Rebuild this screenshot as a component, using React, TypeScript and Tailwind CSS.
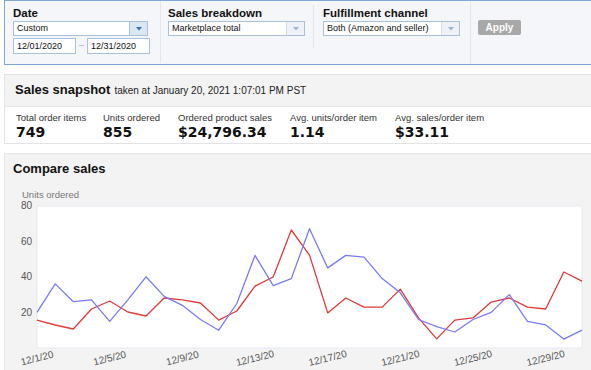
import React from "react";

const units = [20, 36, 26, 27, 15, 27, 40, 29, 24, 16, 10, 25, 52, 35, 39, 67, 45, 52, 51, 39, 31, 16, 12, 9, 16, 20, 30, 15, 13, 5, 10];
const prior = [15.7, 12.9, 10.7, 21.9, 26.4, 20.2, 18, 28.1, 27, 25.3, 15.7, 20.8, 34.8, 39.9, 66.3, 52.2, 19.7, 28.1, 23, 23, 33.1, 16.9, 5.1, 15.7, 16.9, 25.8, 28.1, 23, 21.9, 42.7, 37.6];

const X0 = 37;
const X1 = 582;
const Y0 = 348;
const step = (X1 - X0) / 30;
const py = (v: number) => Y0 - v * 1.78;
const pts = (d: number[]) => d.map((v, i) => `${(X0 + i * step).toFixed(1)},${py(v).toFixed(1)}`).join(" ");

const Arrow = ({ active }: { active?: boolean }) => (
  <div
    className={
      "w-[18px] h-full flex items-center justify-center border-l " +
      (active ? "bg-[#d9e6f4] border-[#a9c0dc]" : "bg-[#eef2f8] border-[#d3dfec]")
    }
  >
    <svg width="6" height="4" viewBox="0 0 6 4">
      <path d="M0 0 L6 0 L3 3.5 Z" fill={active ? "#3f70b2" : "#9fb3cc"} />
    </svg>
  </div>
);

const Select = ({ value, width, active }: { value: string; width: string; active?: boolean }) => (
  <div className={"h-[15px] flex bg-white border border-[#a9c0dc] " + width}>
    <div className="flex-1 pl-[3px] text-[9px] leading-[13px] text-[#111]">{value}</div>
    <Arrow active={active} />
  </div>
);

const Metric = ({ label, value, width }: { label: string; value: string; width: string }) => (
  <div className={width}>
    <div className="text-[9.5px] leading-[12px] text-[#333]">{label}</div>
    <div className="font-['DejaVu_Sans',Verdana,sans-serif] font-bold text-[14px] leading-[16px] text-[#111]">{value}</div>
  </div>
);

const ticks = ["12/1/20", "12/5/20", "12/9/20", "12/13/20", "12/17/20", "12/21/20", "12/25/20", "12/29/20"];

export default function App() {
  return (
    <div className="w-[591px] h-[370px] overflow-hidden bg-white font-['Liberation_Sans',Arial,sans-serif] text-[#111]">
      {/* Filters */}
      <div className="ml-[4px] w-[600px] h-[65px] border border-[#7fa6d8] bg-[#f5f6fa] flex">
        <div className="w-[156px] pl-[8px] pt-[5px] border-r border-[#e3e6ee] mb-[1px]">
          <div className="text-[11.5px] font-bold leading-[14px]">Date</div>
          <Select value="Custom" width="w-[135px] mt-[1px]" active />
          <div className="flex items-center mt-[2px]">
            <div className="w-[63px] h-[16px] bg-white border border-[#a9c0dc] text-[9px] leading-[14px] pl-[3px]">12/01/2020</div>
            <div className="w-[11px] text-center text-[9px] text-[#aaa]">–</div>
            <div className="w-[63px] h-[16px] bg-white border border-[#a9c0dc] text-[9px] leading-[14px] pl-[3px]">12/31/2020</div>
          </div>
        </div>
        <div className="w-[153px] pl-[7px] pt-[5px] border-r border-[#e3e6ee] mb-[16px] mt-[4px]">
          <div className="text-[11.5px] font-bold leading-[14px] -mt-[4px]">Sales breakdown</div>
          <Select value="Marketplace total" width="w-[137px] mt-[1px]" />
        </div>
        <div className="w-[157px] pl-[9px] pt-[5px] border-r border-[#e3e6ee]">
          <div className="text-[11.5px] font-bold leading-[14px]">Fulfillment channel</div>
          <Select value="Both (Amazon and seller)" width="w-[137px] mt-[1px]" />
        </div>
        <div className="pl-[7px] pt-[19px]">
          <div className="w-[43px] h-[15px] rounded-[2px] bg-[#a8a8a8] text-white font-bold text-[10px] leading-[15px] text-center">
            Apply
          </div>
        </div>
      </div>

      {/* Sales snapshot */}
      <div className="ml-[4px] mt-[9px] w-[600px] border border-[#e4e4e4]">
        <div className="h-[32px] bg-[#f3f3f3] border-b border-[#e4e4e4] pl-[10px] pt-[7px] flex items-baseline gap-[4px]">
          <span className="text-[13px] font-bold leading-[16px]">Sales snapshot</span>
          <span className="text-[10px] leading-[16px] text-[#222]">taken at January 20, 2021 1:07:01 PM PST</span>
        </div>
        <div className="flex pl-[11px] pt-[5px] pb-[3px] bg-white">
          <Metric label="Total order items" value="749" width="w-[87px]" />
          <Metric label="Units ordered" value="855" width="w-[75px]" />
          <Metric label="Ordered product sales" value="$24,796.34" width="w-[112px]" />
          <Metric label="Avg. units/order item" value="1.14" width="w-[105px]" />
          <Metric label="Avg. sales/order item" value="$33.11" width="w-[120px]" />
        </div>
      </div>

      {/* Compare sales */}
      <div className="ml-[4px] mt-[9px] w-[600px] h-[230px] border border-[#e6e6e6] bg-[#f3f3f3]">
        <div className="pl-[8px] pt-[7px] text-[13px] font-bold leading-[16px]">Compare sales</div>
        <svg width="590" height="200" className="block">
          <g transform="translate(-5,-177)" fontFamily="'Liberation Sans', Arial, sans-serif">
            <text x="22" y="198" fontSize="9.5" fill="#777">Units ordered</text>
            <rect x={X0} y="206" width={X1 - X0} height={Y0 - 206} fill="#fff" stroke="#e6e9f0" strokeWidth="1" />
            {[80, 60, 40, 20].map((v) => (
              <text key={v} x="32" y={py(v) + 3.5} fontSize="10" fill="#555" textAnchor="end">
                {v}
              </text>
            ))}
            <polyline points={pts(prior)} fill="none" stroke="#e03a3a" strokeWidth="1.3" strokeLinejoin="round" />
            <polyline points={pts(units)} fill="none" stroke="#7a7af8" strokeWidth="1.3" strokeLinejoin="round" />
            {ticks.map((t, i) => {
              const x = X0 + i * 4 * step;
              return (
                <text key={t} x={x} y="361.5" fontSize="10" fill="#555" textAnchor="middle" transform={`rotate(-14 ${x} 358)`}>
                  {t}
                </text>
              );
            })}
          </g>
        </svg>
      </div>
    </div>
  );
}
